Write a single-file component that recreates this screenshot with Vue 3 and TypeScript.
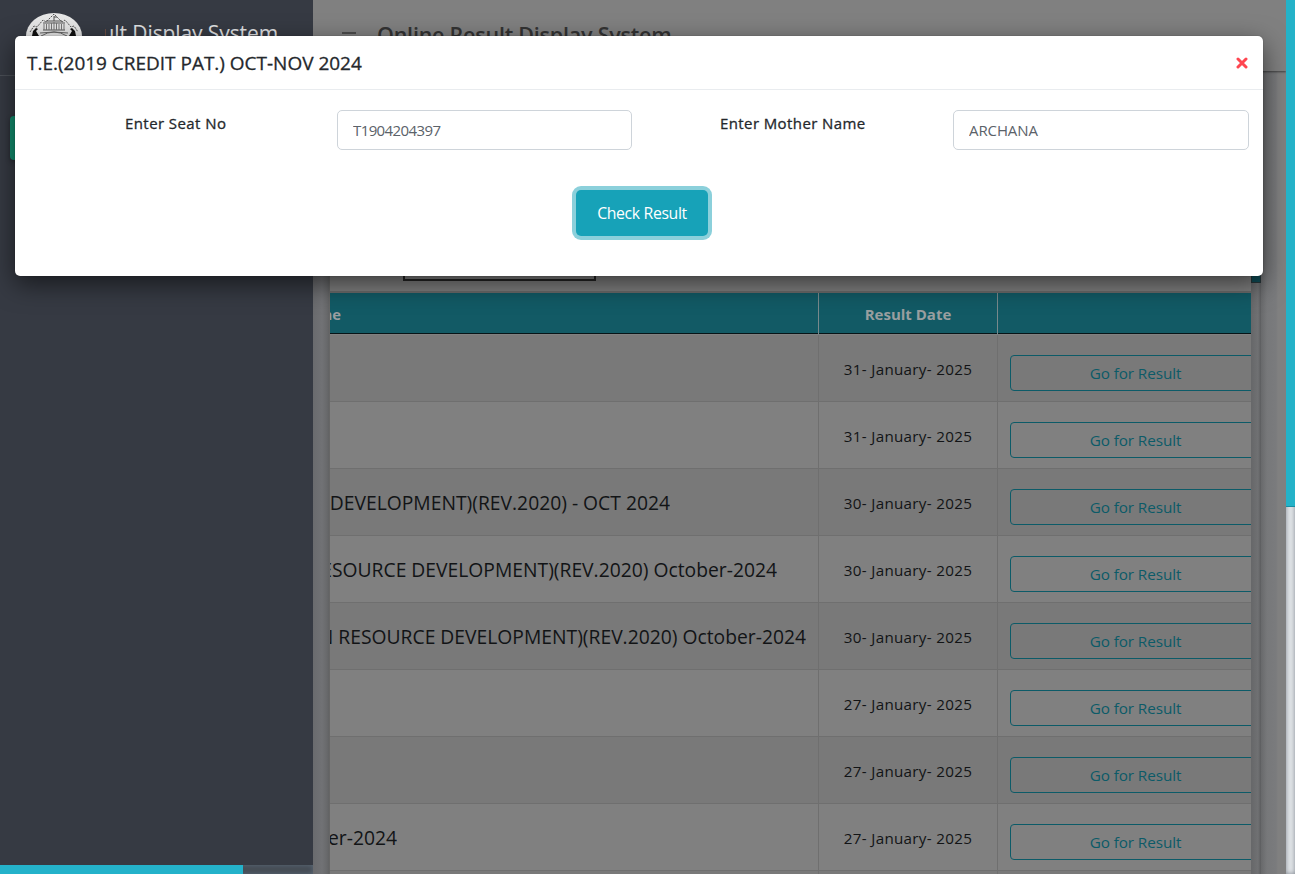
<script setup lang="ts">
import { ref } from 'vue'

interface ResultRow {
  name: string
  end: number
  date: string
}

// `end` is where the course name finishes inside the scrolled first column
const rows: ResultRow[] = [
  { name: '', end: 0, date: '31- January- 2025' },
  { name: '', end: 0, date: '31- January- 2025' },
  { name: 'DEVELOPMENT)(REV.2020) - OCT 2024', end: 340, date: '30- January- 2025' },
  { name: 'RESOURCE DEVELOPMENT)(REV.2020) October-2024', end: 447, date: '30- January- 2025' },
  { name: 'HUMAN RESOURCE DEVELOPMENT)(REV.2020) October-2024', end: 476, date: '30- January- 2025' },
  { name: '', end: 0, date: '27- January- 2025' },
  { name: '', end: 0, date: '27- January- 2025' },
  { name: 'October-2024', end: 67, date: '27- January- 2025' },
  { name: '', end: 0, date: '' },
]

const seatNo = ref('T1904204397')
const motherName = ref('ARCHANA')
</script>

<template>
  <div class="page">
    <aside class="sidebar">
      <div class="brand">
        <svg class="logo" viewBox="0 0 56 48">
          <ellipse cx="28" cy="23" rx="28" ry="23" fill="#e6e6e6" />
          <path d="M4 19 L8 13 L11 14 L17 7 L20 9 L28 1 L36 9 L39 7 L45 14 L48 13 L52 19" fill="none" stroke="#555" stroke-width="1" stroke-dasharray="2 1" />
          <path d="M17 10h22M20 8h16M17 17h22M28 3v5M28 4h3" stroke="#555" stroke-width="1" fill="none" />
          <path d="M18 11v6M20.500 11v6M23 11v6M25.500 10v7M28 9v8M30.500 10v7M33 11v6M35.500 11v6M38 11v6" stroke="#777" stroke-width="1" />
          <path d="M6 23 l1-5 3-3 2 1 -2 2 3 5zM50 23 l-1-5 -3-3 -2 1 2 2 -3 5z" fill="#111" />
          <path d="M15 23 Q28 15 41 23M14 20 Q28 18 42 20" fill="none" stroke="#666" stroke-width="1" />
        </svg>
        <span class="brand-text">Result Display System</span>
      </div>
      <div class="nav-active"></div>
    </aside>
    <div class="side-scroll"><div class="side-thumb"></div></div>

    <main class="main">
      <header class="topbar">
        <span class="burger"></span>
        <h1>Online Result Display System</h1>
      </header>
      <section class="body">
        <div class="card">
          <div class="filter"><div class="search"></div></div>
          <div class="row head">
            <div class="name"><span class="name-text head-name">Name</span></div>
            <div class="date">Result Date</div>
            <div class="action"></div>
          </div>
          <div v-for="(r, i) in rows" :key="i" class="row" :class="{ odd: i % 2 === 0 }">
            <div class="name"><span class="name-text" :style="{ width: r.end + 'px' }">{{ r.name }}</span></div>
            <div class="date">{{ r.date }}</div>
            <div class="action"><button v-if="r.date" class="go">Go for Result</button></div>
          </div>
        </div>
        <div class="gutter"><div class="gutter-thumb"></div></div>
        <div class="edge"></div>
      </section>
    </main>
    <div class="page-scroll"><div class="page-thumb"></div></div>

    <div class="modal">
      <div class="modal-head">
        <h2>T.E.(2019 CREDIT PAT.) OCT-NOV 2024</h2>
        <svg class="close" viewBox="0 0 12 12"><path d="M2 2 L10 10 M10 2 L2 10" stroke="#ff4650" stroke-width="3" stroke-linecap="round" /></svg>
      </div>
      <div class="form">
        <label class="seat-label">Enter Seat No</label>
        <input v-model="seatNo" class="field seat" />
        <label class="mother-label">Enter Mother Name</label>
        <input v-model="motherName" class="field mother" />
      </div>
      <div class="submit"><button class="check"><span>Check Result</span></button></div>
    </div>
  </div>
</template>

<style>
html, body { margin: 0; overflow: hidden; }
</style>

<style scoped>
* { box-sizing: border-box; }
.page {
  position: relative;
  display: grid;
  grid-template-columns: 313px 973px 9px;
  grid-template-rows: 865px 9px;
  width: 1295px;
  height: 874px;
  overflow: hidden;
  background: #808080;
  font-family: "Open Sans", "Noto Sans", sans-serif;
  color: #121416;
}
.sidebar {
  grid-area: 1 / 1;
  background: #363a43;
  overflow: hidden;
}
.brand {
  display: flex;
  height: 76px;
  padding: 13px 0 0 26px;
  border-bottom: 1px solid #4b5057;
}
.logo { width: 56px; height: 48px; flex: none; }
.brand-text {
  width: 173px;
  margin-left: 23px;
  height: 40px;
  line-height: 40px;
  font-size: 21px;
  letter-spacing: -.1px;
  color: #e0e1e3;
  display: flex;
  justify-content: flex-end;
  overflow: hidden;
  white-space: nowrap;
}
.nav-active {
  width: 290px;
  height: 44px;
  margin: 40px 0 0 10px;
  border-radius: 4px;
  background: #129070;
  box-shadow: 0 2px 5px rgba(0, 0, 0, .3);
}
.side-scroll {
  grid-area: 2 / 1;
  background: #454c55;
  box-shadow: inset 0 0 5px #5c6a78;
}
.side-thumb { width: 243px; height: 9px; background: #24b2ca; }
.main {
  grid-area: 1 / 2 / 3 / 3;
  display: flex;
  flex-direction: column;
  overflow: hidden;
}
.topbar {
  position: relative;
  flex: none;
  display: flex;
  height: 71px;
  box-shadow: 0 1px 2px rgba(0, 0, 0, .5);
}
.burger { width: 14px; height: 2px; margin: 32px 0 0 29px; background: #4c4c4c; }
h1 {
  margin: 0 0 0 21px;
  font-size: 21.5px;
  line-height: 70px;
  font-weight: 600;
  letter-spacing: -.23px;
  color: #333;
  white-space: nowrap;
}
.body {
  flex: 1;
  display: flex;
  background: linear-gradient(90deg, #6a6b6e 0, #717275 9px, #68696b 14px, #5e5f60 17px, #808080 18px);
}
.card {
  width: 922px;
  flex: none;
  margin-left: 16px;
  border-left: 1px solid #666;
  overflow: hidden;
  background: #808080;
}
.filter {
  height: 222px;
  padding: 170px 0 0 73px;
  border-bottom: 2px solid #6b6b6b;
}
.search { width: 193px; height: 40px; border: 2px solid #252525; }
.row {
  display: grid;
  grid-template-columns: 489px 179px 270px;
  height: 67px;
  width: 938px;
  border-bottom: 1px solid #6f6f6f;
}
.row.odd { background: #797979; }
.row.head {
  height: 41px;
  margin-bottom: 1px;
  background: #125a65;
  border-bottom: 1px solid #061417;
  color: #999fa0;
  font-size: 14.8px;
  font-weight: 700;
}
.name, .date { border-right: 1px solid #6f6f6f; }
.head .name, .head .date { border-color: #78898c; }
.name { overflow: hidden; padding-top: 17px; }
.head .name, .head .date { padding-top: 0; line-height: 43px; font-size: 15px; letter-spacing: 0; }
.name-text {
  display: flex;
  justify-content: flex-end;
  overflow: hidden;
  white-space: nowrap;
  font-size: 19.3px;
  line-height: 34px;
}
.head-name { width: 11px; font-size: 14.8px; line-height: 43px; }
.date {
  padding-top: 19px;
  font-size: 15.2px;
  letter-spacing: .3px;
  line-height: 30px;
  text-align: center;
  white-space: nowrap;
}
.action { padding: 20px 0 0 12px; }
.go {
  display: block;
  width: 251px;
  height: 36px;
  border: 1px solid #0c5b68;
  border-radius: 4px;
  background: transparent;
  color: #0c5b68;
  font: 15.3px/32px "Open Sans", sans-serif;
  letter-spacing: -.1px;
  padding: 0;
}
.gutter { width: 10px; background: linear-gradient(90deg, #666769, #707173 70%, #5c5d5f); }
.gutter-thumb { height: 212px; background: #0e4b55; border: 1px solid #273538; }
.edge { flex: 1; background: linear-gradient(90deg, #68696b 0, #77787a 6px, #7a7b7d 15px, #808080 17px); }
.page-scroll {
  grid-area: 1 / 3 / 3 / 4;
  position: relative;
  z-index: 2;
  background: #e2e5e9;
  box-shadow: inset 0 0 5px #808890;
}
.page-thumb { height: 507px; background: #24b2c8; border-bottom: 1px solid #188da1; }
.modal {
  position: absolute;
  left: 15px;
  top: 36px;
  width: 1248px;
  height: 240px;
  border-radius: 5px;
  background: #fff;
  box-shadow: 0 0 1px rgba(0, 0, 0, .5), 0 8px 26px rgba(0, 0, 0, .56);
  color: #24282c;
}
.modal-head {
  display: flex;
  justify-content: space-between;
  height: 54px;
  padding: 0 15px 0 12px;
  border-bottom: 1px solid #e9ecef;
}
h2 {
  margin: 0;
  font-size: 18.98px;
  line-height: 54px;
  font-weight: 500;
  white-space: nowrap;
  -webkit-text-stroke: .3px #24282c;
}
.close { width: 12px; height: 12px; margin-top: 21px; }
.form {
  display: grid;
  grid-template-columns: 212px 383px 233px 296px;
  padding: 20px 0 0 110px;
}
label {
  font-size: 15px;
  letter-spacing: .42px;
  line-height: 27px;
  font-weight: 500;
  white-space: nowrap;
  -webkit-text-stroke: .3px #24282c;
}
.field {
  width: 295px;
  height: 40px;
  border: 1px solid #ced4da;
  border-radius: 5px;
  padding: 0 15px;
  font: 15px "Open Sans", sans-serif;
  letter-spacing: -.6px;
  color: #5b6269;
  background: #fff;
  outline: 0;
}
.field.mother { width: 296px; letter-spacing: -.1px; }
.mother-label { letter-spacing: .4px; }
.submit { padding: 40px 0 0 561px; }
.check {
  display: block;
  width: 132px;
  height: 46px;
  border: 0;
  border-radius: 5px;
  background: #17a2b8;
  box-shadow: 0 0 0 4px #8bd0db;
  color: #fff;
  font: 15.800px "Open Sans", sans-serif;
  letter-spacing: -.35px;
  padding: 0;
}
</style>
